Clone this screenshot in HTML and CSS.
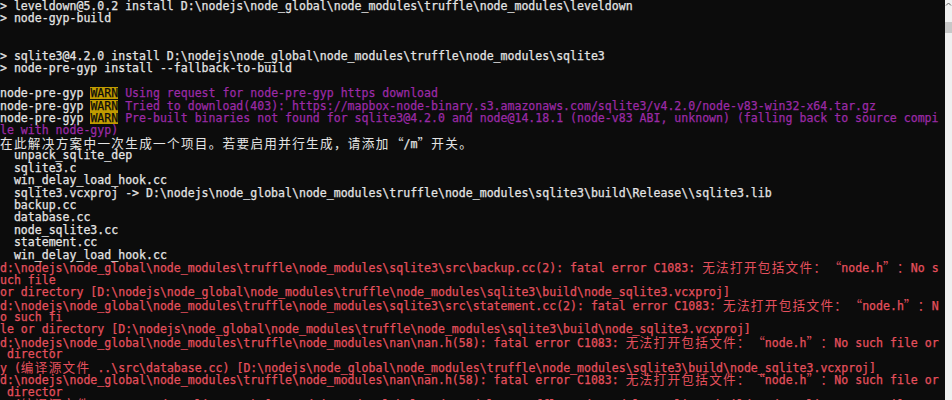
FILE: index.html
```html
<!DOCTYPE html>
<html>
<head>
<meta charset="utf-8">
<link rel="stylesheet" href="styles.css">
</head>
<body>
<div class="win">
<div class="term">
<div class="l">&gt; leveldown@5.0.2 install D:\nodejs\node_global\node_modules\truffle\node_modules\leveldown</div>
<div class="l">&gt; node-gyp-build</div>
<div class="l"> </div>
<div class="l"> </div>
<div class="l">&gt; sqlite3@4.2.0 install D:\nodejs\node_global\node_modules\truffle\node_modules\sqlite3</div>
<div class="l">&gt; node-pre-gyp install --fallback-to-build</div>
<div class="l"> </div>
<div class="l">node-pre-gyp <span class="wn">WARN</span> <span class="m">Using request for node-pre-gyp https download</span></div>
<div class="l">node-pre-gyp <span class="wn">WARN</span> <span class="m">Tried to download(403): https://mapbox-node-binary.s3.amazonaws.com/sqlite3/v4.2.0/node-v83-win32-x64.tar.gz</span></div>
<div class="l">node-pre-gyp <span class="wn">WARN</span> <span class="m">Pre-built binaries not found for sqlite3@4.2.0 and node@14.18.1 (node-v83 ABI, unknown) (falling back to source compi</span></div>
<div class="l m">le with node-gyp)</div>
<div class="l"><span class="w">在此解决方案中一次生成一个项目。若要启用并行生成，请添加</span><span class="ql">“</span>/m<span class="qr">”</span><span class="w">开关。</span></div>
<div class="l">  unpack_sqlite_dep</div>
<div class="l">  sqlite3.c</div>
<div class="l">  win_delay_load_hook.cc</div>
<div class="l">  sqlite3.vcxproj -&gt; D:\nodejs\node_global\node_modules\truffle\node_modules\sqlite3\build\Release\\sqlite3.lib</div>
<div class="l">  backup.cc</div>
<div class="l">  database.cc</div>
<div class="l">  node_sqlite3.cc</div>
<div class="l">  statement.cc</div>
<div class="l">  win_delay_load_hook.cc</div>
<div class="l r">d:\nodejs\node_global\node_modules\truffle\node_modules\sqlite3\src\backup.cc(2): fatal error C1083: <span class="w">无法打开包括文件：</span><span class="ql">“</span>node.h<span class="qr">”</span><span class="w">：</span>No s</div>
<div class="l r">uch file</div>
<div class="l r">or directory [D:\nodejs\node_global\node_modules\truffle\node_modules\sqlite3\build\node_sqlite3.vcxproj]</div>
<div class="l r">d:\nodejs\node_global\node_modules\truffle\node_modules\sqlite3\src\statement.cc(2): fatal error C1083: <span class="w">无法打开包括文件：</span><span class="ql">“</span>node.h<span class="qr">”</span><span class="w">：</span>N</div>
<div class="l r">o such fi</div>
<div class="l r">le or directory [D:\nodejs\node_global\node_modules\truffle\node_modules\sqlite3\build\node_sqlite3.vcxproj]</div>
<div class="l r">d:\nodejs\node_global\node_modules\truffle\node_modules\nan\nan.h(58): fatal error C1083: <span class="w">无法打开包括文件：</span><span class="ql">“</span>node.h<span class="qr">”</span><span class="w">：</span>No such file or</div>
<div class="l r"> director</div>
<div class="l r">y (<span class="w">编译源文件</span> ..\src\database.cc) [D:\nodejs\node_global\node_modules\truffle\node_modules\sqlite3\build\node_sqlite3.vcxproj]</div>
<div class="l r">d:\nodejs\node_global\node_modules\truffle\node_modules\nan\nan.h(58): fatal error C1083: <span class="w">无法打开包括文件：</span><span class="ql">“</span>node.h<span class="qr">”</span><span class="w">：</span>No such file or</div>
<div class="l r"> director</div>
<div class="l r">y (<span class="w">编译源文件</span> ..\src\node_sqlite3.cc) [D:\nodejs\node_global\node_modules\truffle\node_modules\sqlite3\build\node_sqlite3.vcxproj]</div>
</div>
<div class="sb">
<svg class="arrow" width="7" height="6" viewBox="0 0 7 6"><path d="M1 4.5 L3.5 2 L6 4.5" fill="none" stroke="#606060" stroke-width="1"/></svg>
<div class="thumb"></div>
</div>
</div>
</body>
</html>
```

FILE: styles.css
```css
html, body {
  margin: 0;
  padding: 0;
  background: #0c0c0c;
}

.win {
  display: flex;
  width: 952px;
  height: 400px;
  overflow: hidden;
}

.term {
  flex: 1;
  height: 400px;
  overflow: hidden;
  color: #e4e4e4;
  font-family: "DejaVu Sans Mono", "Liberation Mono", monospace;
  font-size: 11.56px;
  line-height: 12.45px;
  -webkit-text-stroke: 0.25px currentColor;
}

.l {
  height: 12.45px;
  white-space: pre;
}

.r {
  color: #e5505d;
}

.m {
  color: #9b2aa6;
}

.wn {
  display: inline-block;
  height: 12px;
  vertical-align: top;
  background: #c19c00;
  color: #0c0c0c;
}

.w {
  font-family: "Noto Sans CJK SC", sans-serif;
  font-size: 12.6px;
  letter-spacing: 1.32px;
  line-height: 12.45px;
  -webkit-text-stroke: 0;
}

.ql, .qr {
  display: inline-block;
  width: 13.92px;
  height: 12.45px;
  vertical-align: top;
  font-family: "Noto Sans CJK SC", sans-serif;
  font-size: 12.6px;
  line-height: 12.45px;
  -webkit-text-stroke: 0;
}

.ql {
  text-align: right;
}

.qr {
  text-align: left;
}

.sb {
  width: 7px;
  height: 400px;
  background: #f0f0f0;
  display: flex;
  flex-direction: column;
}

.arrow {
  display: block;
  margin-top: 1px;
}

.thumb {
  margin-top: 15px;
  height: 11px;
  background: #c8c8c8;
}
```
